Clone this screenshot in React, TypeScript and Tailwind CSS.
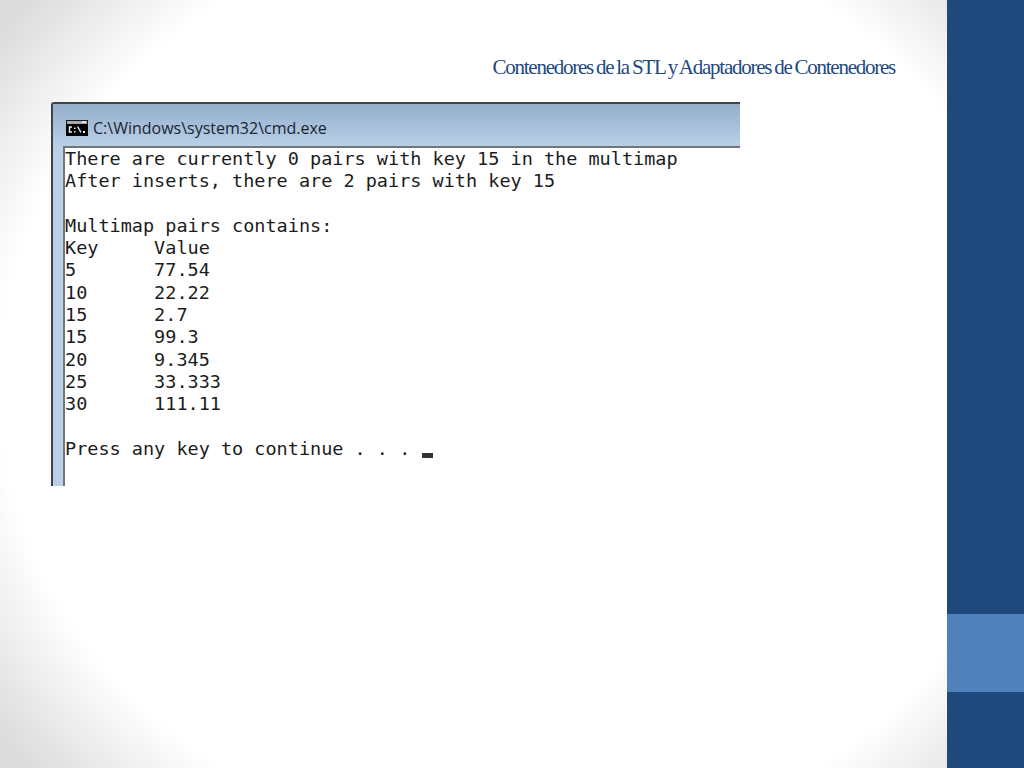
const lines = [
  'There are currently 0 pairs with key 15 in the multimap',
  'After inserts, there are 2 pairs with key 15',
  '',
  'Multimap pairs contains:',
  'Key     Value',
  '5       77.54',
  '10      22.22',
  '15      2.7',
  '15      99.3',
  '20      9.345',
  '25      33.333',
  '30      111.11',
  '',
]

function CmdIcon() {
  return (
    <svg width="22" height="16" viewBox="0 0 22 16" className="shrink-0">
      <rect width="22" height="16" fill="#1a1a1a" />
      <rect x="1" y="1" width="20" height="3" fill="#a8a8a8" />
      <rect x="16" y="1" width="4" height="2" fill="#e0e0e0" />
      <rect x="0" y="4" width="22" height="12" fill="#000000" />
      <path d="M6 7H3.5V12H6" fill="none" stroke="#f0f0f0" strokeWidth="1.4" />
      <rect x="8" y="7.5" width="1.5" height="1.5" fill="#f0f0f0" />
      <rect x="8" y="11" width="1.5" height="1.5" fill="#f0f0f0" />
      <path d="M11.5 6.5L15 12.5" fill="none" stroke="#f0f0f0" strokeWidth="1.4" />
      <rect x="17" y="11" width="2" height="2" fill="#f0f0f0" />
    </svg>
  )
}

export default function App() {
  return (
    <div className="flex h-[768px] w-[1024px] overflow-hidden bg-[radial-gradient(520px_465px_at_520px_384px,#ffffff_100%,#dcdcdc_125%)]">
      <main className="flex-1 flex flex-col">
        <h1 className="mt-[54px] mr-[52px] h-[26px] text-right text-[21px] leading-[26px] tracking-[-1.25px] [word-spacing:-1px] text-[#1f497d] font-['Liberation_Serif',serif]">
          Contenedores de la STL y Adaptadores de Contenedores
        </h1>

        {/* Console screenshot */}
        <div className="mt-[22px] ml-[51px] w-[689px] h-[384px] flex flex-col border-t-2 border-l-2 border-[#404347] rounded-tl-[3px] bg-[#b9d0e8]">
          <div className="h-[42px] pt-[5px] pl-[13px] flex items-center gap-[5px] rounded-tl-[3px] bg-gradient-to-b from-[#94aecb] to-[#b9d0e8] text-[16px] text-[#1b2530] font-['Open_Sans',sans-serif]">
            <CmdIcon />
            <span>C:\Windows\system32\cmd.exe</span>
          </div>
          <div className="flex-1 ml-[10px] border-t-2 border-l-2 border-[#757575] bg-white pt-0 text-[18.5px] leading-[22.3px] whitespace-pre text-[#1c1c1c] font-['DejaVu_Sans_Mono',monospace]">
            {lines.map((line, i) => (
              <div key={i} className="h-[22.3px]">{line}</div>
            ))}
            <div className="flex items-end h-[22.3px]">
              <span>Press any key to continue . . . </span>
              <span className="ml-[1px] w-[11px] h-[5px] mb-[2px] bg-[#333333]" />
            </div>
          </div>
        </div>
      </main>

      {/* Side bar */}
      <aside className="w-[77px] flex flex-col">
        <div className="h-[614px] bg-[#1f497d]" />
        <div className="h-[78px] bg-[#4f81bd]" />
        <div className="flex-1 bg-[#1f497d]" />
      </aside>
    </div>
  )
}
